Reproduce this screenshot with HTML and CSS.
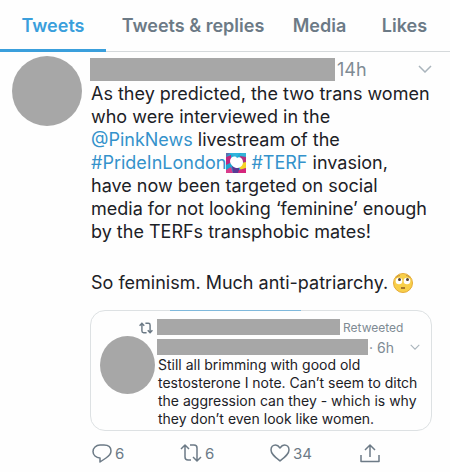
FILE: index.html
```html
<!DOCTYPE html>
<html lang="en">
<head>
    <meta charset="UTF-8">
    <meta name="viewport" content="width=device-width, initial-scale=1.0">
    <title>Tweets</title>
    <link rel="stylesheet" href="styles.css">
</head>
<body>

<nav class="tabs">
    <a class="active" href="#tweets">Tweets</a>
    <a href="#replies">Tweets &amp; replies</a>
    <a href="#media">Media</a>
    <a href="#likes">Likes</a>
</nav>

<article class="tweet">
    <div class="avatar"></div>
    <div class="tweet-body">
        <div class="tweet-header">
            <span class="hidden-name"></span>
            <span class="time">14h</span>
            <button class="more" aria-label="More">
                <svg width="14" height="8" viewBox="0 0 14 8"><path d="M1 1l6 6 6-6"/></svg>
            </button>
        </div>

        <p class="tweet-text">As they predicted, the two trans women who were interviewed in the<br><a href="#pinknews">@PinkNews</a> livestream of the<br><a href="#pride">#PrideInLondon</a><svg class="pride" width="20" height="20" viewBox="0 0 20 20">
                <rect width="20" height="20" fill="#23a9d3"/>
                <path d="M0 0h4L0 4z" fill="#5c6fb0"/>
                <path d="M4 0h10l-4 5z" fill="#2fb4dc"/>
                <path d="M13 2l3-2h4v4z" fill="#35b4d8"/>
                <path d="M14 3l6 1v6l-5-1z" fill="#b5307f"/>
                <path d="M0 4l5-2v8l-5 3z" fill="#c0267f"/>
                <path d="M0 12l4-2 3 4-3 4-4-2z" fill="#1fa5cf"/>
                <path d="M0 17l5-3 2 6H0z" fill="#d83c8c"/>
                <path d="M6 13l7 2v5H7z" fill="#5a3a94"/>
                <path d="M13 14l3-4 4-1v6l-5 2z" fill="#f5d327"/>
                <path d="M13 17l7-2v5h-8z" fill="#d5257c"/>
                <path d="M11 5C13 3 17 5 17 9c0 4-3 6-7 6-3-1-6-4-6-7 0-4 5-6 7-3z" fill="#fff"/>
            </svg> <a href="#terf">#TERF</a> invasion,<br>have now been targeted on social media for not looking ‘feminine’ enough by the TERFs transphobic mates!</p>

        <p class="tweet-text">So feminism. Much anti-patriarchy. <svg class="emoji" width="20" height="20" viewBox="0 0 20 20">
                <circle cx="10" cy="10" r="9.500" fill="#f8cf4a" stroke="#e5ab38"/>
                <path d="M3 4.500q2-2 4-2M13 2.500q2 0 4 2" fill="none" stroke="#c9963a"/>
                <circle cx="6" cy="8" r="3.300" fill="#fff"/>
                <circle cx="14" cy="8" r="3.300" fill="#fff"/>
                <circle cx="6.500" cy="6.500" r="1.500" fill="#544030"/>
                <circle cx="14.500" cy="6.500" r="1.500" fill="#544030"/>
                <path d="M8 15h4" stroke="#8a5a22" stroke-width="1.500"/>
            </svg></p>

        <div class="quote">
            <div class="quote-side">
                <svg width="14" height="12" viewBox="0 0 24 20"><path d="M1 6l4-4 4 4M5 2v13q0 3 3 3h5M23 14l-4 4-4-4M19 18V5q0-3-3-3h-5"/></svg>
                <div class="quote-avatar"></div>
            </div>
            <div class="quote-body">
                <div class="quote-row">
                    <span class="hidden-retweeter"></span>
                    <span class="retweeted">Retweeted</span>
                </div>
                <div class="quote-row">
                    <span class="hidden-author"></span>
                    <span class="quote-time">· 6h</span>
                    <button class="more" aria-label="More">
                        <svg width="10" height="6" viewBox="0 0 14 8"><path d="M1 1l6 6 6-6"/></svg>
                    </button>
                </div>
                <p class="quote-text">Still all brimming with good old testosterone I note. Can’t seem to ditch the aggression can they - which is why they don’t even look like women.</p>
            </div>
        </div>

        <div class="actions">
            <button>
                <svg width="20" height="20" viewBox="0 0 20 20"><path d="M8 2h4c4 0 7 2 7 6 0 3-2 5-5 7l-6 4v-4C4 15 1 12 1 8.500S4 2 8 2z"/></svg>
                6
            </button>
            <button>
                <svg width="22" height="20" viewBox="0 0 22 20"><path d="M1 6l4-4 4 4M5 2v12q0 3 3 3h3M21 14l-4 4-4-4M17 18V5q0-3-3-3h-4"/></svg>
                6
            </button>
            <button>
                <svg width="20" height="20" viewBox="0 0 20 20"><path d="M10 18C5 14 1 11 1 7c0-3 2-5 4.500-5C8 2 9 3.500 10 5c1-1.500 2-3 4.500-3C17 2 19 4 19 7c0 4-4 7-9 11z"/></svg>
                34
            </button>
            <button aria-label="Share">
                <svg width="20" height="20" viewBox="0 0 20 20"><path d="M1 12v6.500h18V12M10 14V2M5 7l5-5 5 5"/></svg>
            </button>
        </div>
    </div>
</article>

</body>
</html>
```

FILE: styles.css
```css
* {
    box-sizing: border-box;
}

body {
    margin: 0;
    font-family: Inter, "Liberation Sans", sans-serif;
    background-color: #fefefe;
    color: #1c2126;
}

a {
    color: #3492cb;
    text-decoration: none;
}

p {
    margin: 0;
}

button {
    padding: 0;
    border: 0;
    background: none;
    font-family: inherit;
    color: inherit;
    cursor: pointer;
}

svg {
    display: block;
    flex-shrink: 0;
}

/* profile tabs */
.tabs {
    display: grid;
    grid-template-columns: 106fr 174fr 79fr 91fr;
    height: 52px;
    border-bottom: 1px solid #d5d9db;
}

.tabs a {
    height: 52px;
    line-height: 52px;
    text-align: center;
    white-space: nowrap;
    font-size: 18px;
    font-weight: 600;
    color: #6c7a86;
}

.tabs .active {
    color: #3a9fdc;
    border-bottom: 3px solid #3a9fdc;
}

/* tweet */
.tweet {
    display: flex;
    gap: 8px;
    padding: 4px 18px 8px 12px;
}

.avatar {
    width: 70px;
    height: 70px;
    flex-shrink: 0;
    border-radius: 50%;
    background-color: #a7a7a7;
}

.tweet-body {
    flex: 1;
    min-width: 0;
}

.tweet-header {
    display: flex;
    align-items: center;
    height: 26px;
    font-size: 18px;
    color: #7f8b94;
}

.hidden-name {
    width: 245px;
    height: 23px;
    margin-right: 2px;
    background-color: #a7a7a7;
}

.more {
    margin-left: auto;
}

.more path {
    fill: none;
    stroke: #a9b4bc;
    stroke-width: 1.5;
}

.tweet-text {
    margin-bottom: 28px;
    padding-left: 1px;
    font-size: 18px;
    line-height: 23px;
}

.pride,
.emoji {
    display: inline-block;
    vertical-align: -4px;
}

/* quoted tweet */
.quote {
    position: relative;
    display: flex;
    margin-top: -12px;
    padding: 8px 11px 2px 9px;
    border: 1px solid #dde1e3;
    border-radius: 15px;
}

.quote::before {
    content: "";
    position: absolute;
    top: -1px;
    left: 79px;
    width: 131px;
    height: 1px;
    background-color: #7fb9dc;
}

.quote-side {
    width: 57px;
    flex-shrink: 0;
}

.quote-side svg {
    margin: 3px 4px 2px auto;
}

.quote-side path {
    fill: none;
    stroke: #6c7a86;
    stroke-width: 2.5;
}

.quote-avatar {
    width: 55px;
    height: 58px;
    border-radius: 50%;
    background-color: #a7a7a7;
}

.quote-body {
    flex: 1;
    min-width: 0;
}

.quote-row {
    display: flex;
    align-items: center;
    height: 16px;
    margin-bottom: 4px;
    font-size: 14px;
    color: #7f8b94;
}

.hidden-retweeter,
.hidden-author {
    width: 183px;
    height: 16px;
    margin-right: 3px;
    background-color: #a7a7a7;
}

.hidden-author {
    width: 211px;
    margin-right: 1px;
}

.retweeted {
    font-size: 12px;
}

.quote-text {
    margin: -3px 0 0 1px;
    font-size: 14px;
    line-height: 18px;
}

/* reply, retweet, like, share */
.actions {
    display: grid;
    grid-template-columns: 88fr 90fr 90fr 72fr;
    margin-top: 12px;
    padding-left: 2px;
}

.actions button {
    display: flex;
    align-items: center;
    gap: 3px;
    font-size: 15px;
    color: #6c7a86;
}

.actions path {
    fill: none;
    stroke: #6c7a86;
    stroke-width: 1.5;
    stroke-linejoin: round;
}
```
